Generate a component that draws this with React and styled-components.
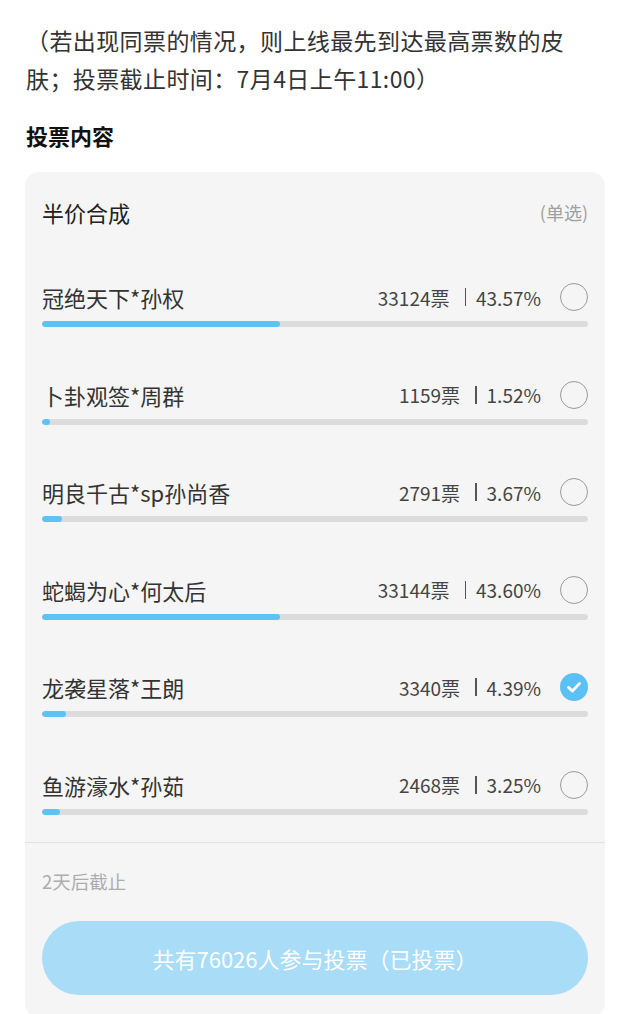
import React from "react";
import styled, { createGlobalStyle } from "styled-components";

const Global = createGlobalStyle`
  html, body { margin: 0; padding: 0; background: #ffffff; }
  body {
    font-family: "Noto Sans CJK SC", "Noto Sans", sans-serif;
    color: #333333;
    -webkit-font-smoothing: antialiased;
  }
`;

const Page = styled.div`
  width: 630px;
  padding-top: 21px;
  box-sizing: border-box;
`;

const Intro = styled.p`
  margin: 0;
  padding: 0 50px 0 26px;
  font-size: 23px;
  letter-spacing: 0.4px;
  line-height: 38px;
  color: #333333;
`;

const SectionTitle = styled.h2`
  margin: 23px 0 0;
  padding-left: 26px;
  font-size: 22px;
  font-weight: 700;
  line-height: 30px;
  color: #111111;
`;

const Card = styled.section`
  margin: 22px 25px 0;
  background: #f5f5f5;
  border-radius: 14px;
  padding: 25px 0 22px;
`;

const CardHeader = styled.div`
  display: flex;
  align-items: center;
  justify-content: space-between;
  padding: 0 17px;
  height: 30px;
`;

const CardTitle = styled.span`
  font-size: 22px;
  color: #222222;
`;

const Mode = styled.span`
  font-size: 18px;
  color: #a0a0a0;
`;

const OptionList = styled.ul`
  list-style: none;
  margin: 55px 0 0;
  padding: 0 17px;
  display: flex;
  flex-direction: column;
  gap: 52.5px;
`;

const Option = styled.li`
  display: flex;
  flex-direction: column;
`;

const OptionRow = styled.div`
  display: flex;
  align-items: center;
  height: 30px;
`;

const OptionName = styled.span`
  flex: 1;
  font-size: 22px;
  color: #333333;
  white-space: nowrap;
`;

const Stats = styled.span`
  display: flex;
  align-items: center;
  font-size: 19px;
  color: #444444;
  white-space: nowrap;
`;

const Divider = styled.span`
  display: inline-block;
  width: 1.5px;
  height: 18px;
  background: #555555;
  margin: 0 10px 0 15px;
`;

const Radio = styled.span`
  margin-left: 19px;
  width: 28px;
  height: 28px;
  box-sizing: border-box;
  border-radius: 50%;
  border: ${(p) => (p.$checked ? "none" : "1.5px solid #9a9a9a")};
  background: ${(p) => (p.$checked ? "#5bc1f5" : "transparent")};
  display: flex;
  align-items: center;
  justify-content: center;
  flex-shrink: 0;
`;

const Track = styled.div`
  margin-top: 9px;
  height: 6px;
  border-radius: 3px;
  background: #dcdcdc;
  overflow: hidden;
`;

const Fill = styled.div`
  height: 100%;
  border-radius: 3px;
  background: #5bc4f5;
`;

const Rule = styled.hr`
  margin: 27px 0 0;
  border: none;
  height: 1px;
  background: #e2e2e2;
`;

const Deadline = styled.div`
  margin-top: 25px;
  padding: 0 17px;
  font-size: 18.5px;
  line-height: 26px;
  color: #adadad;
`;

const VoteButton = styled.button`
  display: block;
  margin: 27px 17px 0;
  width: calc(100% - 34px);
  height: 74px;
  border: none;
  border-radius: 37px;
  background: #a8dcf7;
  color: #ffffff;
  font-family: inherit;
  font-size: 22px;
  cursor: default;
`;

const options = [
  { name: "冠绝天下*孙权", votes: 33124, pct: "43.57" },
  { name: "卜卦观签*周群", votes: 1159, pct: "1.52" },
  { name: "明良千古*sp孙尚香", votes: 2791, pct: "3.67" },
  { name: "蛇蝎为心*何太后", votes: 33144, pct: "43.60" },
  { name: "龙袭星落*王朗", votes: 3340, pct: "4.39", checked: true },
  { name: "鱼游濠水*孙茹", votes: 2468, pct: "3.25" },
];

const Check = () => (
  <svg width="18" height="18" viewBox="0 0 18 18" fill="none">
    <path
      d="M3.5 9.4 L7.4 13 L14.6 5.4"
      stroke="#ffffff"
      strokeWidth="2.8"
      strokeLinecap="round"
      strokeLinejoin="round"
    />
  </svg>
);

export default function App() {
  return (
    <Page>
      <Global />
      <Intro>
        （若出现同票的情况，则上线最先到达最高票数的皮肤；投票截止时间：7月4日上午11:00）
      </Intro>
      <SectionTitle>投票内容</SectionTitle>
      <Card>
        <CardHeader>
          <CardTitle>半价合成</CardTitle>
          <Mode>(单选)</Mode>
        </CardHeader>
        <OptionList>
          {options.map((o) => (
            <Option key={o.name}>
              <OptionRow>
                <OptionName>{o.name}</OptionName>
                <Stats>
                  {o.votes}票
                  <Divider />
                  {o.pct}%
                </Stats>
                <Radio $checked={o.checked}>{o.checked && <Check />}</Radio>
              </OptionRow>
              <Track>
                <Fill style={{ width: `${o.pct}%` }} />
              </Track>
            </Option>
          ))}
        </OptionList>
        <Rule />
        <Deadline>2天后截止</Deadline>
        <VoteButton>共有76026人参与投票（已投票）</VoteButton>
      </Card>
    </Page>
  );
}
